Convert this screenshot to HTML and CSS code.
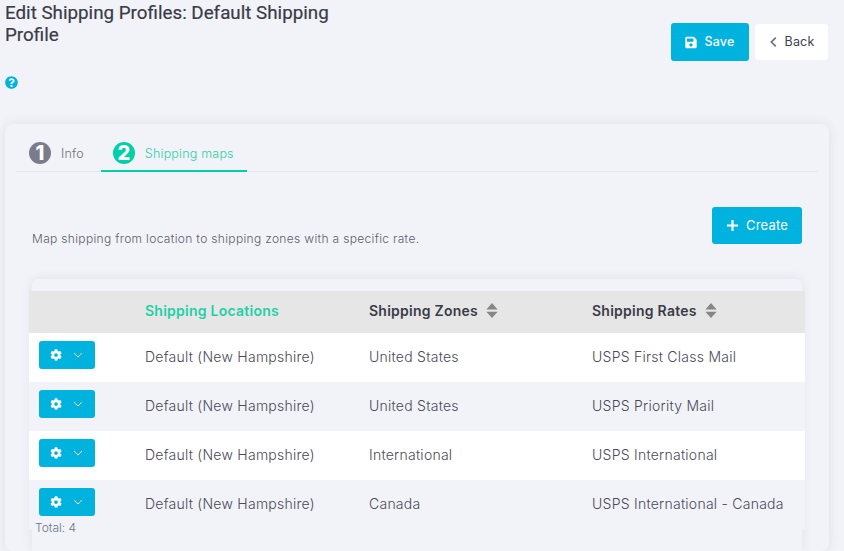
FILE: index.html
```html
<!DOCTYPE html>
<html lang="en">
<head>
<meta charset="utf-8">
<title>Edit Shipping Profile</title>
<link rel="stylesheet" href="styles.css">
</head>
<body>
<svg class="sprites" width="0" height="0">
  <symbol id="gear" viewBox="0 0 512 512"><path fill="#fff" d="M487 315l-42-25a192 192 0 0 0 0-68l42-25c5-3 7-9 5-14-11-35-29-66-54-93-4-4-10-5-15-2l-42 25a188 188 0 0 0-59-34V30c0-6-4-10-9-11-36-8-73-8-107 0-6 1-9 5-9 11v49a194 194 0 0 0-59 34L96 88c-5-3-11-2-15 2-24 27-43 58-54 93-2 5 0 11 5 14l42 25a192 192 0 0 0 0 68l-42 25c-5 3-7 9-5 14 11 35 30 66 54 93 4 4 10 5 15 2l42-25c17 15 37 26 59 34v49c0 6 4 10 9 11 36 8 73 8 107 0 6-1 9-5 9-11v-49c22-8 42-19 59-34l42 25c5 3 11 2 15-2 25-27 43-58 54-93 2-5 0-11-5-14zM256 336a80 80 0 1 1 0-160 80 80 0 0 1 0 160z"/></symbol>
  <symbol id="chev" viewBox="0 0 10 6"><path fill="none" stroke="#fff" stroke-width="1" d="M1 1l4 4 4-4"/></symbol>
  <symbol id="sort" viewBox="0 0 12 16"><path fill="#868686" d="M6 0l6 6.800H0zM6 16l6-6.800H0z"/></symbol>
</svg>
<header class="top">
  <div class="heading">
    <h1>Edit Shipping Profiles: Default Shipping Profile</h1>
    <svg class="help" viewBox="0 0 512 512" width="13" height="13"><path fill="#00b2de" d="M504 256c0 137-111 248-248 248S8 393 8 256 119 8 256 8s248 111 248 248zM263 90c-54 0-89 23-116 63-4 5-3 12 3 16l35 26c5 4 13 3 17-2 18-23 30-36 57-36 20 0 45 13 45 33 0 15-12 23-33 34-23 13-55 30-55 72v8c0 7 5 12 12 12h56c7 0 12-5 12-12v-5c0-29 85-30 85-109 0-59-62-100-118-100zm-7 253c-26 0-47 21-47 47s21 47 47 47 47-21 47-47-21-47-47-47z"/></svg>
  </div>
  <div class="actions">
    <button class="btn btn-primary btn-save">
      <svg viewBox="0 0 448 512" width="12" height="13"><path fill="#fff" d="M433 129l-84-84c-9-9-21-14-34-14H48C21 31 0 52 0 79v352c0 27 21 48 48 48h352c27 0 48-21 48-48V163c0-13-5-25-15-34zM224 415c-35 0-64-29-64-64s29-64 64-64 64 29 64 64-29 64-64 64zm96-305v101c0 7-5 12-12 12H76c-7 0-12-5-12-12V107c0-7 5-12 12-12h229c3 0 6 1 8 4l4 3c2 2 3 5 3 8z"/></svg>
      Save
    </button>
    <button class="btn btn-back">
      <svg viewBox="0 0 10 14" width="8" height="12"><path fill="none" stroke="#6b7690" stroke-width="2.200" d="M8.500 1.500 3 7l5.500 5.500"/></svg>
      Back
    </button>
  </div>
</header>
<main class="card">
  <nav class="tabs">
    <div class="tab"><span class="num num-grey">1</span><span class="tab-label">Info</span></div>
    <div class="tab tab-active"><span class="num num-green">2</span><span class="tab-label">Shipping maps</span></div>
  </nav>
  <section class="intro">
    <p>Map shipping from location to shipping zones with a specific rate.</p>
    <button class="btn btn-primary btn-create">
      <svg viewBox="0 0 14 14" width="13" height="13"><path stroke="#fff" stroke-width="2.400" d="M7 1v12M1 7h12"/></svg>
      Create
    </button>
  </section>
  <section class="table-card">
    <div class="row row-head">
      <div class="cell cell-action"></div>
      <div class="cell cell-loc th-active">Shipping Locations</div>
      <div class="cell cell-zone">Shipping Zones<svg class="sort"><use href="#sort"/></svg></div>
      <div class="cell cell-rate">Shipping Rates<svg class="sort"><use href="#sort"/></svg></div>
    </div>
    <div class="row row-white">
      <div class="cell cell-action"><button class="gear-btn"><svg class="gear"><use href="#gear"/></svg><svg class="chev"><use href="#chev"/></svg></button></div>
      <div class="cell cell-loc">Default (New Hampshire)</div>
      <div class="cell cell-zone">United States</div>
      <div class="cell cell-rate">USPS First Class Mail</div>
    </div>
    <div class="row row-grey">
      <div class="cell cell-action"><button class="gear-btn"><svg class="gear"><use href="#gear"/></svg><svg class="chev"><use href="#chev"/></svg></button></div>
      <div class="cell cell-loc">Default (New Hampshire)</div>
      <div class="cell cell-zone">United States</div>
      <div class="cell cell-rate">USPS Priority Mail</div>
    </div>
    <div class="row row-white">
      <div class="cell cell-action"><button class="gear-btn"><svg class="gear"><use href="#gear"/></svg><svg class="chev"><use href="#chev"/></svg></button></div>
      <div class="cell cell-loc">Default (New Hampshire)</div>
      <div class="cell cell-zone">International</div>
      <div class="cell cell-rate">USPS International</div>
    </div>
    <div class="row row-grey">
      <div class="cell cell-action"><button class="gear-btn"><svg class="gear"><use href="#gear"/></svg><svg class="chev"><use href="#chev"/></svg></button></div>
      <div class="cell cell-loc">Default (New Hampshire)</div>
      <div class="cell cell-zone">Canada</div>
      <div class="cell cell-rate">USPS International - Canada</div>
    </div>
    <div class="total">Total: 4</div>
  </section>
</main>
</body>
</html>
```
FILE: styles.css
```css
* { box-sizing: border-box; }
html, body { height: 100%; }
body {
  margin: 0;
  padding: 0 15px 0 5px;
  background: #f1f3f9;
  font-family: "Inter", "Open Sans", sans-serif;
  color: #4a4a58;
  overflow: hidden;
}
.sprites { display: block; height: 0; }
.top {
  display: flex;
  justify-content: space-between;
  height: 124px;
}
.heading { width: 340px; }
h1 {
  margin: 2px 0 0;
  font: 400 18.800px/22px "Roboto", sans-serif;
  -webkit-text-stroke: .2px #3a3b47;
  color: #3a3b47;
}
.help { display: block; margin-top: 30px; }
.actions {
  display: flex;
  align-items: center;
  gap: 6px;
  height: 38px;
  margin: 23px 1px 0 0;
}
.btn {
  display: flex;
  align-items: center;
  justify-content: center;
  border: 0;
  border-radius: 3px;
  font: 400 12.500px/1 "Inter", sans-serif;
  letter-spacing: .2px;
  padding: 0;
}
.btn-primary { background: #00b2de; color: #fff; }
.btn-save { width: 78px; height: 38px; gap: 7px; font-weight: 500; }
.btn-back { width: 73px; height: 36px; gap: 8px; background: #fff; color: #3e3f4e; }
.card {
  height: 427px;
  border-radius: 8px;
  background: #f1f3f9;
  box-shadow: 0 0 12px rgba(60, 60, 80, .1);
  padding: 0 11px;
}
.tabs {
  display: flex;
  height: 48px;
  border-bottom: 1px solid #e7e9ef;
}
.tab {
  display: flex;
  align-items: center;
  gap: 10px;
  padding: 10px 12px 0 13px;
  height: 48px;
  font-size: 12.500px;
  font-weight: 300;
  letter-spacing: .2px;
  color: #6f6f7e;
}
.tab-active {
  width: 146px;
  margin-left: 5px;
  color: #2ecfa8;
  border-bottom: 2px solid #00cfa8;
  padding: 12px 0 0 12px;
}
.num {
  display: flex;
  align-items: center;
  justify-content: center;
  flex: none;
  width: 22px;
  height: 22px;
  border-radius: 50%;
  color: #fff;
  font: 800 20px/1 "Inter", sans-serif;
}
.num-grey { background: #7b7c8b; }
.num-green { background: #00cfa8; }
.intro {
  display: flex;
  justify-content: space-between;
  align-items: flex-start;
  padding: 35px 16px 0;
  height: 107px;
}
.intro p {
  margin: 24px 0 0;
  font-size: 12px;
  font-weight: 300;
  letter-spacing: .33px;
  color: #5d5d6c;
}
.btn-create { width: 90px; height: 37px; gap: 7px; font-size: 13px; }
.table-card {
  position: relative;
  margin: 0 16px;
  height: 272px;
  padding-top: 12px;
  border-radius: 6px 6px 0 0;
  background: #f1f3f9;
  box-shadow: 0 0 12px rgba(60, 60, 80, .09);
}
.row {
  display: flex;
  align-items: flex-start;
  margin: 0 -3px;
  height: 49px;
  font-size: 14px;
  font-weight: 300;
  letter-spacing: .25px;
  color: #4a4a58;
}
.cell { padding-top: 15px; }
.row-head {
  height: 42px;
  background: #e6e6e6;
  font-weight: 600;
  letter-spacing: .25px;
  color: #3a3b47;
}
.row-head .cell { padding-top: 11px; }
.row-white { background: #fff; }
.row-grey { background: #f1f3f9; }
.cell-action { width: 116px; padding: 8px 0 0 10px; }
.cell-loc { width: 224px; }
.cell-zone { width: 223px; display: flex; align-items: center; gap: 8px; }
.cell-rate { display: flex; align-items: center; gap: 8px; }
.th-active { color: #1fd0a6; }
.sort { width: 12px; height: 15px; }
.gear { width: 12px; height: 12px; }
.chev { width: 10px; height: 6px; }
.gear-btn {
  display: flex;
  align-items: center;
  justify-content: flex-start;
  gap: 11px;
  width: 56px;
  height: 28px;
  padding: 0 0 0 11px;
  border: 0;
  border-radius: 3px;
  background: #00b2de;
}
.total {
  position: absolute;
  left: 3px;
  top: 241px;
  font-size: 12px;
  font-weight: 300;
  color: #6d7886;
}
```
